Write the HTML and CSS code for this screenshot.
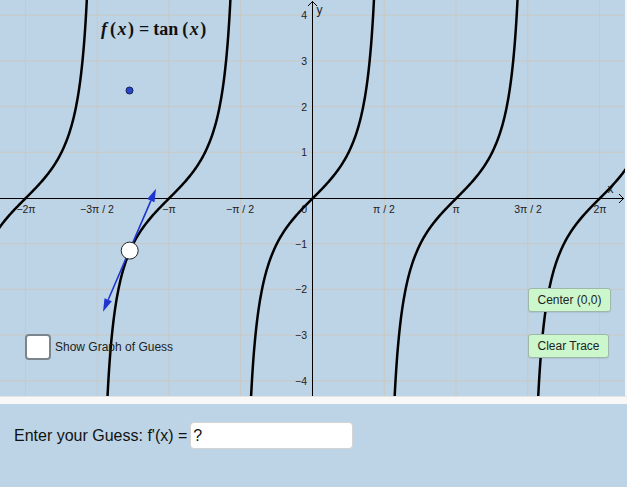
FILE: index.html
```html
<!DOCTYPE html>
<html>
<head>
<meta charset="utf-8">
<link rel="stylesheet" href="styles.css">
</head>
<body>
<div class="app">
  <div class="graph">
    <svg class="plot" width="625" height="396" viewBox="0 0 625 396">
      <g class="grid">
        <line x1="25.4" y1="0" x2="25.4" y2="396"/>
        <line x1="97.2" y1="0" x2="97.2" y2="396"/>
        <line x1="168.9" y1="0" x2="168.9" y2="396"/>
        <line x1="240.7" y1="0" x2="240.7" y2="396"/>
        <line x1="384.3" y1="0" x2="384.3" y2="396"/>
        <line x1="456.1" y1="0" x2="456.1" y2="396"/>
        <line x1="527.8" y1="0" x2="527.8" y2="396"/>
        <line x1="599.6" y1="0" x2="599.6" y2="396"/>
        <line x1="0" y1="15.2" x2="625" y2="15.2"/>
        <line x1="0" y1="60.9" x2="625" y2="60.9"/>
        <line x1="0" y1="106.6" x2="625" y2="106.6"/>
        <line x1="0" y1="152.3" x2="625" y2="152.3"/>
        <line x1="0" y1="243.7" x2="625" y2="243.7"/>
        <line x1="0" y1="289.4" x2="625" y2="289.4"/>
        <line x1="0" y1="335.1" x2="625" y2="335.1"/>
        <line x1="0" y1="380.8" x2="625" y2="380.8"/>
      </g>
      <g class="axes">
        <line x1="0" y1="198.5" x2="624" y2="198.5"/>
        <line x1="312.5" y1="1" x2="312.5" y2="396"/>
        <polyline points="308,6 312.5,1.5 317,6"/>
        <polyline points="619,194 623.5,198.5 619,203"/>
      </g>
      <g class="ticks">
        <text x="26" y="212.5" text-anchor="middle">−2π</text>
        <text x="97" y="212.5" text-anchor="middle">−3π / 2</text>
        <text x="169" y="212.5" text-anchor="middle">−π</text>
        <text x="240" y="212.5" text-anchor="middle">−π / 2</text>
        <text x="307" y="212.5" text-anchor="end">0</text>
        <text x="384" y="212.5" text-anchor="middle">π / 2</text>
        <text x="456" y="212.5" text-anchor="middle">π</text>
        <text x="528" y="212.5" text-anchor="middle">3π / 2</text>
        <text x="600" y="212.5" text-anchor="middle">2π</text>
        <text x="307" y="19" text-anchor="end">4</text>
        <text x="307" y="64.5" text-anchor="end">3</text>
        <text x="307" y="110.5" text-anchor="end">2</text>
        <text x="307" y="156" text-anchor="end">1</text>
        <text x="307" y="247.5" text-anchor="end">−1</text>
        <text x="307" y="293" text-anchor="end">−2</text>
        <text x="307" y="339" text-anchor="end">−3</text>
        <text x="307" y="384.5" text-anchor="end">−4</text>
        <text class="axis-name" x="316.5" y="14">y</text>
        <text class="axis-name" x="607.5" y="193">x</text>
      </g>
      <g class="curve" id="curve"></g>
      <g class="tangent">
        <line x1="108.2" y1="299.8" x2="150.9" y2="200.6"/>
        <polygon points="156,188.7 154.5,202.2 147.2,199.1"/>
        <polygon points="103,311.7 111.8,301.3 104.5,298.2"/>
      </g>
      <circle class="slope-dot" cx="129.5" cy="90.5" r="3.5"/>
      <circle class="point" cx="129.7" cy="250.6" r="8.5"/>
    </svg>
    <div class="formula"><span class="grp"><span class="i f">f</span>(<span class="i x">x</span>)</span><span class="eq">=</span><span class="op">tan</span><span class="grp">(<span class="i x">x</span>)</span></div>
    <label class="guess-toggle"><span class="box"></span><span class="box-label">Show Graph of Guess</span></label>
    <button class="btn btn-center">Center (0,0)</button>
    <button class="btn btn-clear">Clear Trace</button>
  </div>
  <div class="strip"></div>
  <div class="panel">
    <span class="prompt">Enter your Guess: f'(x) =</span>
    <div class="field">?</div>
  </div>
</div>
<script src="script.js"></script>
</body>
</html>
```

FILE: styles.css
```css
html, body {
  margin: 0;
  padding: 0;
}
body {
  background: #f6f6f6;
  font-family: "Liberation Sans", Arial, sans-serif;
  width: 627px;
  height: 487px;
  overflow: hidden;
}
.app {
  display: flex;
  flex-direction: column;
  width: 627px;
  height: 487px;
}
.graph {
  position: relative;
  width: 625px;
  height: 396px;
  background: #bcd4e6;
  overflow: hidden;
}
.plot {
  display: block;
}
.grid line {
  stroke: #cac8c4;
  stroke-width: 1;
}
.axes line {
  stroke: #000;
  stroke-width: 1;
}
.axes polyline {
  fill: none;
  stroke: #000;
  stroke-width: 1;
}
.ticks text {
  font-family: "Liberation Sans", Arial, sans-serif;
  font-size: 10.5px;
  fill: #222;
}
.ticks .axis-name {
  font-size: 12px;
}
.curve path {
  fill: none;
  stroke: #000;
  stroke-width: 2.5;
  stroke-linejoin: round;
}
.tangent line {
  stroke: #1f35cf;
  stroke-width: 1.6;
}
.tangent polygon {
  fill: #1f35cf;
}
.slope-dot {
  fill: #2a45c8;
  stroke: #15225e;
  stroke-width: 1;
}
.point {
  fill: #fff;
  stroke: #222;
  stroke-width: 1;
}
.formula {
  position: absolute;
  left: 101px;
  top: 19px;
  display: flex;
  align-items: baseline;
  font-family: "Liberation Serif", "Times New Roman", serif;
  font-weight: bold;
  font-size: 18px;
  line-height: 20px;
  color: #111;
  white-space: nowrap;
}
.formula .i {
  font-style: italic;
}
.formula .f {
  margin-right: 3px;
}
.formula .x {
  margin: 0 1.5px;
}
.formula .eq {
  margin: 0 4px 0 5px;
}
.formula .op {
  margin-right: 4px;
}
.guess-toggle {
  position: absolute;
  left: 25px;
  top: 334px;
  display: flex;
  align-items: center;
  gap: 4px;
}
.box {
  width: 22px;
  height: 22px;
  background: #fff;
  border: 2px solid #7b858d;
  border-radius: 4px;
}
.box-label {
  font-size: 12px;
  color: #222;
}
.btn {
  position: absolute;
  height: 24px;
  padding: 0;
  background: #ccf7cc;
  border: 1px solid #9fb6a8;
  border-radius: 3px;
  font-family: "Liberation Sans", Arial, sans-serif;
  font-size: 12px;
  color: #222;
  box-shadow: 0 1px 1px rgba(0, 0, 0, 0.08);
}
.btn-center {
  left: 528px;
  top: 288px;
  width: 83px;
}
.btn-clear {
  left: 528px;
  top: 334px;
  width: 81px;
}
.strip {
  height: 8px;
  background: #f8f8f8;
  border-top: 1px solid #e4e4e4;
  box-sizing: border-box;
}
.panel {
  flex: 1;
  background: #bcd4e6;
  display: flex;
  align-items: flex-start;
  gap: 3px;
  padding: 18px 0 0 14px;
}
.prompt {
  font-size: 16px;
  color: #111;
  line-height: 27px;
}
.field {
  width: 159px;
  height: 25px;
  background: #fff;
  border: 1px solid #d4d4d4;
  border-radius: 4px;
  font-size: 16px;
  line-height: 25px;
  padding-left: 2px;
  color: #111;
}
```

FILE: script.js
```js
(function () {
  var ox = 312.5, oy = 198.5, s = 45.7;
  var g = document.getElementById('curve');
  var lim = 5.2;
  for (var k = -2; k <= 2; k++) {
    var n = 300;
    var d = '';
    for (var i = 0; i <= n; i++) {
      var t = Math.atan(-lim) + (Math.atan(lim) - Math.atan(-lim)) * i / n;
      var yv = Math.tan(t);
      var xv = k * Math.PI + t;
      var px = ox + xv * s;
      var py = oy - yv * s;
      d += (i === 0 ? 'M' : 'L') + px.toFixed(2) + ' ' + py.toFixed(2);
    }
    var p = document.createElementNS('http://www.w3.org/2000/svg', 'path');
    p.setAttribute('d', d);
    g.appendChild(p);
  }
})();
```
